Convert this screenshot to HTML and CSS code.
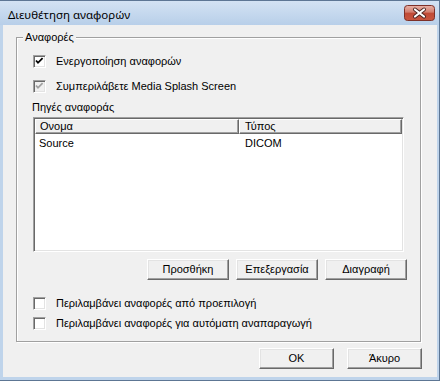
FILE: index.html
```html
<!DOCTYPE html>
<html>
<head>
<meta charset="utf-8">
<link rel="stylesheet" href="styles.css">
</head>
<body>
<div class="window">
  <div class="titlebar">
    <span class="title">Διευθέτηση αναφορών</span>
    <span class="close">
      <svg width="31" height="16" viewBox="0 0 31 16">
        <defs>
          <linearGradient id="cg" x1="0" y1="0" x2="0" y2="1">
            <stop offset="0" stop-color="#e9b3a8"/>
            <stop offset="0.45" stop-color="#d27d6d"/>
            <stop offset="0.5" stop-color="#c04a36"/>
            <stop offset="1" stop-color="#c9563f"/>
          </linearGradient>
        </defs>
        <rect x="0.5" y="0.5" width="30" height="15" rx="3" ry="3" fill="url(#cg)" stroke="#7d3028"/>
        <path d="M11 4.5 L20 11.5 M20 4.5 L11 11.5" stroke="#4a2420" stroke-width="4" stroke-linecap="round"/>
        <path d="M11 4.5 L20 11.5 M20 4.5 L11 11.5" stroke="#ffffff" stroke-width="2.2" stroke-linecap="round"/>
      </svg>
    </span>
  </div>
  <div class="client">
    <div class="group">
      <span class="legend">Αναφορές</span>
      <div class="check first">
        <span class="cb"><svg width="11" height="11" viewBox="0 0 11 11"><path d="M2 4.5 L4 6.8 L8.6 2.2" fill="none" stroke="#000" stroke-width="1.8"/></svg></span>
        <span>Ενεργοποίηση αναφορών</span>
      </div>
      <div class="check second">
        <span class="cb disabled"><svg width="11" height="11" viewBox="0 0 11 11"><path d="M2 4.5 L4 6.8 L8.6 2.2" fill="none" stroke="#a0a0a0" stroke-width="1.8"/></svg></span>
        <span>Συμπεριλάβετε Media Splash Screen</span>
      </div>
      <div class="sources-label">Πηγές αναφοράς</div>
      <div class="list">
        <div class="list-header">
          <div class="hcell c1">Ονομα</div>
          <div class="hcell c2">Τύπος</div>
        </div>
        <div class="list-row">
          <div class="cell c1">Source</div>
          <div class="cell c2">DICOM</div>
        </div>
      </div>
      <div class="list-buttons">
        <div class="btn wide">Προσθήκη</div>
        <div class="btn wide">Επεξεργασία</div>
        <div class="btn wide">Διαγραφή</div>
      </div>
      <div class="check third">
        <span class="cb"></span>
        <span>Περιλαμβάνει αναφορές από προεπιλογή</span>
      </div>
      <div class="check fourth">
        <span class="cb"></span>
        <span>Περιλαμβάνει αναφορές για αυτόματη αναπαραγωγή</span>
      </div>
    </div>
    <div class="footer">
      <div class="btn">OK</div>
      <div class="btn">Άκυρο</div>
    </div>
  </div>
</div>
</body>
</html>
```

FILE: styles.css
```css
html, body {
  margin: 0;
  padding: 0;
}

body {
  width: 440px;
  height: 381px;
  overflow: hidden;
  font-family: "Liberation Sans", Arial, sans-serif;
  font-size: 11px;
  line-height: 13px;
  color: #000;
}

.window {
  width: 440px;
  height: 381px;
  box-sizing: border-box;
  background: #bfd4eb;
  border-top: 1px solid #5d7694;
  border-right: 1px solid #5d7694;
  border-bottom: 1px solid #5d7694;
  display: flex;
  flex-direction: column;
}

.titlebar {
  height: 24px;
  flex: none;
  display: flex;
  justify-content: space-between;
  align-items: flex-start;
  background: linear-gradient(#d3e2f3, #b8cfe9);
}

.title {
  font-family: "Noto Sans", "Open Sans", sans-serif;
  font-size: 11.5px;
  line-height: 16px;
  padding: 6px 0 0 8px;
  color: #000;
}

.close {
  display: flex;
  margin: 4px 4px 0 0;
}

.client {
  flex: 1;
  margin: 0 2px 3px 3px;
  background: #f0f0f0;
  display: flex;
  flex-direction: column;
  align-items: flex-start;
}

.group {
  margin: 12px 0 0 13px;
  width: 405px;
  height: 305px;
  box-sizing: border-box;
  border: 1px solid #a0a0a0;
  box-shadow: inset 1px 1px 0 #fff, 1px 1px 0 #fff;
  display: flex;
  flex-direction: column;
  align-items: flex-start;
}

.legend {
  margin: -7px 0 0 6px;
  padding: 0 2px;
  background: #f0f0f0;
  line-height: 13px;
}

.check {
  display: flex;
  align-items: center;
  gap: 10px;
  height: 13px;
  margin-left: 16px;
}

.check.first { margin-top: 11px; }
.check.second { margin-top: 12px; }
.check.third { margin-top: 17px; }
.check.fourth { margin-top: 7px; }

.cb {
  width: 13px;
  height: 13px;
  box-sizing: border-box;
  flex: none;
  border: 1px solid;
  border-color: #a0a0a0 #fff #fff #a0a0a0;
  box-shadow: inset 1px 1px 0 #696969, inset -1px -1px 0 #e3e3e3;
  background: #fff;
  display: flex;
}

.cb.disabled {
  background: #f0f0f0;
}

.sources-label {
  margin: 8px 0 0 15px;
}

.list {
  margin: 3px 0 0 16px;
  width: 371px;
  height: 135px;
  box-sizing: border-box;
  border: 1px solid;
  border-color: #a0a0a0 #fff #fff #a0a0a0;
  box-shadow: inset 1px 1px 0 #696969, inset -1px -1px 0 #e3e3e3;
  background: #fff;
  padding: 1px;
}

.list-header,
.list-row {
  display: grid;
  grid-template-columns: 204px 1fr;
}

.hcell {
  height: 15px;
  box-sizing: border-box;
  border: 1px solid;
  border-color: #fff #696969 #696969 #fff;
  box-shadow: inset -1px -1px 0 #a0a0a0;
  background: #f0f0f0;
  line-height: 12px;
  padding-left: 4px;
}

.hcell.c2 {
  padding-left: 5px;
}

.list-row {
  margin-top: 3px;
}

.cell {
  padding-left: 4px;
}

.cell.c2 {
  padding-left: 6px;
}

.list-buttons {
  display: flex;
  gap: 7px;
  margin: 7px 0 0 130px;
}

.btn {
  width: 75px;
  height: 21px;
  box-sizing: border-box;
  border: 1px solid;
  border-color: #fff #696969 #696969 #fff;
  box-shadow: inset -1px -1px 0 #a0a0a0, inset 1px 1px 0 #e3e3e3;
  background: #f0f0f0;
  display: flex;
  align-items: center;
  justify-content: center;
}

.btn.wide {
  width: 82px;
}

.footer {
  align-self: stretch;
  display: flex;
  justify-content: flex-end;
  gap: 13px;
  margin-top: 6px;
  padding-right: 15px;
}
```
